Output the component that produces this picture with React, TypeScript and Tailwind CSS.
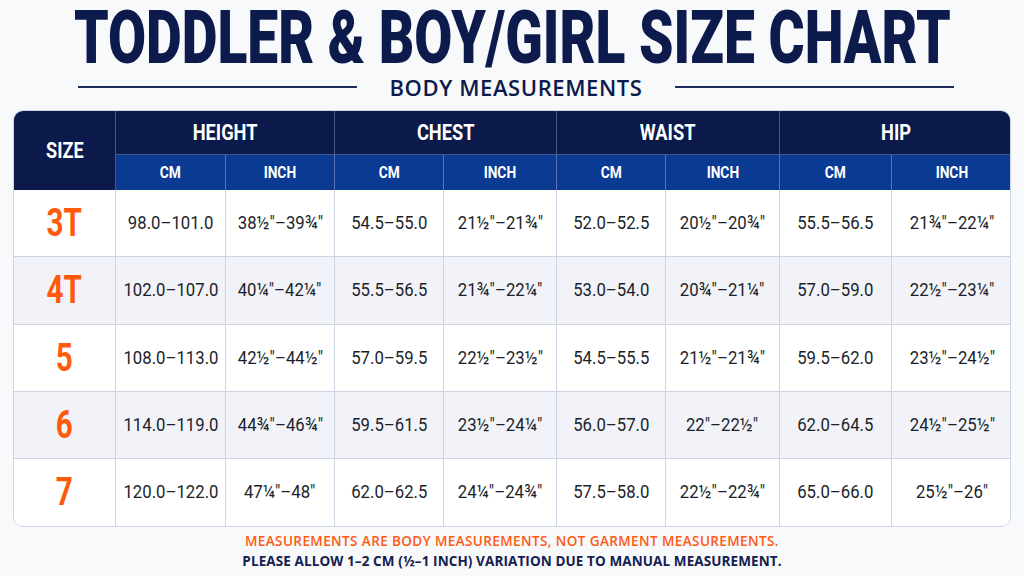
import React from "react";

const rows: { size: string; v: string[] }[] = [
  { size: "3T", v: ["98.0–101.0", "38½\"–39¾\"", "54.5–55.0", "21½\"–21¾\"", "52.0–52.5", "20½\"–20¾\"", "55.5–56.5", "21¾\"–22¼\""] },
  { size: "4T", v: ["102.0–107.0", "40¼\"–42¼\"", "55.5–56.5", "21¾\"–22¼\"", "53.0–54.0", "20¾\"–21¼\"", "57.0–59.0", "22½\"–23¼\""] },
  { size: "5", v: ["108.0–113.0", "42½\"–44½\"", "57.0–59.5", "22½\"–23½\"", "54.5–55.5", "21½\"–21¾\"", "59.5–62.0", "23½\"–24½\""] },
  { size: "6", v: ["114.0–119.0", "44¾\"–46¾\"", "59.5–61.5", "23½\"–24¼\"", "56.0–57.0", "22\"–22½\"", "62.0–64.5", "24½\"–25½\""] },
  { size: "7", v: ["120.0–122.0", "47¼\"–48\"", "62.0–62.5", "24¼\"–24¾\"", "57.5–58.0", "22½\"–22¾\"", "65.0–66.0", "25½\"–26\""] },
];

const groups = ["HEIGHT", "CHEST", "WAIST", "HIP"];

export default function App() {
  return (
    <div className="w-[1024px] h-[576px] overflow-hidden bg-[#f8f9fb] flex flex-col items-center" style={{ fontFamily: "Roboto, 'Liberation Sans', sans-serif" }}>
      <div className="pt-[11px] h-[74px] w-full flex justify-center items-start text-[54px] leading-none font-black text-[#0d1b4c] whitespace-nowrap">
        <span className="inline-block scale-x-[1.021] scale-y-[1.37]">TODDLER &amp; BOY/GIRL SIZE CHART</span>
      </div>
      <div className="mt-[1px] h-[24px] w-full flex items-center justify-center gap-[32px] pl-[8px]">
        <div className="w-[279px] h-[2px] bg-[#1d2c5e]" />
        <div className="text-[22px] leading-[20px] font-semibold text-[#0d1b4c] tracking-[0.6px]" style={{ fontFamily: "'Open Sans', sans-serif" }}>BODY MEASUREMENTS</div>
        <div className="w-[279px] h-[2px] bg-[#1d2c5e]" />
      </div>
      <div className="mt-[11px] w-[998px] rounded-[10px] overflow-hidden border border-[#cdd5e5] bg-white grid grid-cols-[102px_110px_109px_109px_113px_109px_114px_112px_120px] grid-rows-[44px_35px_67px_68px_67px_67px_67px]">
        <div className="row-span-2 bg-[#0b1a4b] flex items-center justify-center text-white text-[22px] font-bold border-r border-[#46578a]">
          <span className="inline-block scale-x-[0.82]">SIZE</span>
        </div>
        {groups.map((g, i) => (
          <div key={g} className={`col-span-2 bg-[#0b1a4b] flex items-center justify-center text-white text-[22px] font-bold border-b border-[#46578a] ${i < 3 ? "border-r" : ""}`}>
            <span className="inline-block scale-x-[0.83]">{g}</span>
          </div>
        ))}
        {groups.flatMap((g, i) =>
          ["CM", "INCH"].map((u, j) => (
            <div key={g + u} className={`bg-[#0a3a92] flex items-center justify-center text-white text-[16px] font-bold ${i * 2 + j < 7 ? "border-r border-[#5a72b5]" : ""}`}>
              <span className="inline-block scale-x-[0.86]">{u}</span>
            </div>
          ))
        )}
        {rows.map((r, ri) => {
          const bg = ri % 2 === 1 ? "bg-[#f1f3f8]" : "bg-white";
          const bb = ri < rows.length - 1 ? "border-b" : "";
          return (
            <React.Fragment key={r.size}>
              <div className={`${bg} ${bb} border-r border-[#cdd5e5] flex items-center justify-center text-[39px] font-bold text-[#ff5a0a]`}>
                <span className="inline-block scale-x-[0.76]">{r.size}</span>
              </div>
              {r.v.map((val, ci) => (
                <div key={ci} className={`${bg} ${bb} ${ci < 7 ? "border-r" : ""} border-[#cdd5e5] flex items-center justify-center text-[19px] text-[#1c1f2a] whitespace-nowrap`}>
                  <span className="inline-block scale-x-[0.88]">{val}</span>
                </div>
              ))}
            </React.Fragment>
          );
        })}
      </div>
      <div className="mt-[4px] text-[13.5px] tracking-[0.4px] font-semibold text-[#ff5a14] leading-[20px]" style={{ fontFamily: "'Open Sans', sans-serif" }}>
        MEASUREMENTS ARE BODY MEASUREMENTS, NOT GARMENT MEASUREMENTS.
      </div>
      <div className="text-[13.5px] tracking-[0.1px] font-bold text-[#14204f] leading-[20px]" style={{ fontFamily: "'Open Sans', sans-serif" }}>
        PLEASE ALLOW 1–2 CM (½–1 INCH) VARIATION DUE TO MANUAL MEASUREMENT.
      </div>
    </div>
  );
}
